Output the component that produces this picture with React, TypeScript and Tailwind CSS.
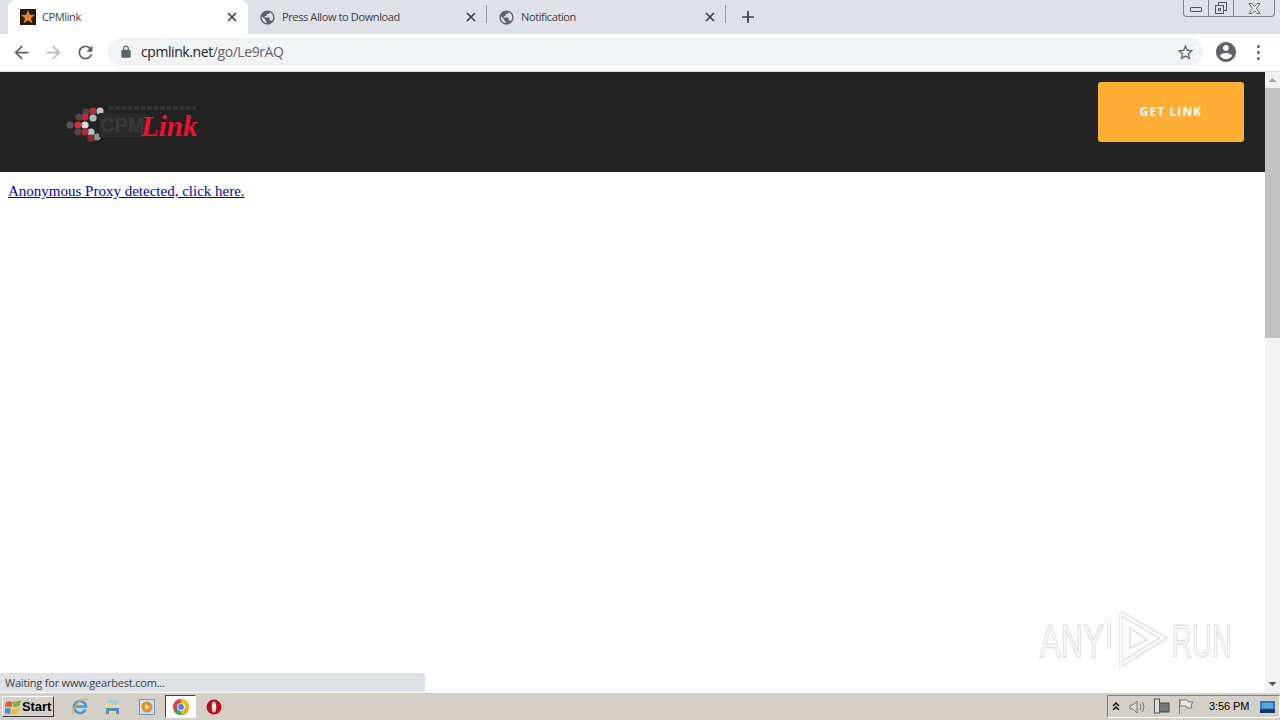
import type { ReactNode } from "react";

const uiFont = "font-['Open_Sans','Noto_Sans',sans-serif]";

const paths = {
  back: "M20 11H7.83l5.59-5.59L12 4l-8 8 8 8 1.41-1.41L7.83 13H20v-2z",
  forward: "M4 11h12.17l-5.59-5.59L12 4l8 8-8 8-1.41-1.41L16.17 13H4v-2z",
  reload:
    "M17.65 6.35C16.2 4.9 14.21 4 12 4c-4.42 0-7.99 3.58-7.99 8s3.57 8 7.99 8c3.73 0 6.84-2.55 7.73-6h-2.08c-.82 2.33-3.04 4-5.65 4-3.31 0-6-2.69-6-6s2.69-6 6-6c1.66 0 3.14.69 4.22 1.78L13 11h7V4l-2.35 2.35z",
  lock: "M18 8h-1V6c0-2.76-2.24-5-5-5S7 3.24 7 6v2H6c-1.1 0-2 .9-2 2v10c0 1.1.9 2 2 2h12c1.1 0 2-.9 2-2V10c0-1.1-.9-2-2-2zM9 6c0-1.66 1.34-3 3-3s3 1.34 3 3v2H9V6z",
  account:
    "M12 2C6.48 2 2 6.48 2 12s4.48 10 10 10 10-4.48 10-10S17.52 2 12 2zm0 3c1.66 0 3 1.34 3 3s-1.34 3-3 3-3-1.34-3-3 1.34-3 3-3zm0 14.2c-2.5 0-4.71-1.28-6-3.22.03-1.99 4-3.08 6-3.08 1.99 0 5.97 1.09 6 3.08-1.29 1.94-3.5 3.22-6 3.22z",
  star: "M22 9.24l-7.19-.62L12 2 9.19 8.63 2 9.24l5.46 4.73L5.82 21 12 17.27 18.18 21l-1.63-7.03L22 9.24zM12 15.4l-3.76 2.27 1-4.28-3.32-2.88 4.38-.38L12 6.1l1.71 4.04 4.38.38-3.32 2.88 1 4.28L12 15.4z",
  globe:
    "M12 2C6.48 2 2 6.48 2 12s4.48 10 10 10 10-4.48 10-10S17.52 2 12 2zm-1 17.93c-3.95-.49-7-3.85-7-7.93 0-.62.08-1.21.21-1.79L9 15v1c0 1.1.9 2 2 2v1.93zm6.9-2.54c-.26-.81-1-1.39-1.9-1.39h-1v-3c0-.55-.45-1-1-1H8v-2h2c.55 0 1-.45 1-1V7h2c1.1 0 2-.9 2-2v-.41c2.93 1.19 5 4.06 5 7.41 0 2.08-.8 3.97-2.1 5.39z",
};

function Icon({ d, size, color }: { d: string; size: number; color: string }) {
  return (
    <svg width={size} height={size} viewBox="0 0 24 24" fill={color} className="shrink-0">
      <path d={d} />
    </svg>
  );
}

function CloseX() {
  return (
    <svg width="10" height="10" viewBox="0 0 10 10" className="shrink-0">
      <path d="M1 1l8 8M9 1l-8 8" stroke="#3c4043" strokeWidth="1.7" />
    </svg>
  );
}

function Favicon() {
  return (
    <svg width="16" height="16" viewBox="0 0 16 16" className="shrink-0">
      <rect width="16" height="16" fill="#2a1a0c" />
      <path d="M8 1l1.9 4.8 5.1.3-4 3.2 1.4 5L8 11.5l-4.4 2.8L5 9.3 1 6.1l5.1-.3z" fill="#e8842c" />
    </svg>
  );
}

function Tab({ title, active, width, divider }: { title: string; active?: boolean; width: string; divider?: boolean }) {
  return (
    <div className={`${width} relative flex items-center pr-[11px] ${active ? "h-[34px] rounded-t-lg bg-white pl-3" : "h-[26px] pl-[11px]"}`}>
      {active ? <Favicon /> : <Icon d={paths.globe} size={17} color="#5f6368" />}
      <span className={`ml-[6px] mb-px flex-1 whitespace-nowrap text-[11px] leading-[15px] tracking-[-0.38px] text-[#3c4043] ${uiFont}`}>{title}</span>
      <CloseX />
      {divider && <span className="absolute right-0 top-[1px] h-[18px] w-px bg-[#9aa0a6]" />}
    </div>
  );
}

function TabStrip() {
  return (
    <div className="flex h-[34px] shrink-0 items-end bg-[#dee1e6] pl-2">
      <Tab title="CPMlink" active width="w-[240px]" />
      <div className="flex h-[34px] items-center">
        <Tab title="Press Allow to Download" width="w-[239px]" divider />
        <Tab title="Notification" width="w-[239px]" divider />
        <span className="ml-[16px]">
          <svg width="12" height="12" viewBox="0 0 12 12" className="block">
            <path d="M6 0v12M0 6h12" stroke="#3c4043" strokeWidth="1.7" />
          </svg>
        </span>
      </div>
      <div className="ml-auto mr-[5px] flex h-[17px] w-[92px] self-start rounded-b border border-t-0 border-[#7d8389] bg-[#dee1e6]">
        <WinButton width="w-[25px]">
          <span className="mt-[3px] block h-[5px] w-[12px] rounded-[1px] border border-[#555]" />
        </WinButton>
        <WinButton width="w-[25px]">
          <svg width="12" height="12" viewBox="0 0 12 12" fill="none" stroke="#555">
            <rect x="3.5" y="0.5" width="8" height="8" />
            <rect x="0.5" y="3.5" width="8" height="8" fill="#dee1e6" />
            <rect x="3.5" y="6.5" width="2" height="2" />
          </svg>
        </WinButton>
        <div className="flex flex-1 items-center justify-center">
          <svg width="13" height="11" viewBox="0 0 13 11" fill="#eef0f2" stroke="#666">
            <path d="M1 .5h3l2.5 3 2.5-3h3L8.5 5.500l3.500 5h-3L6.500 7.500 4 10.500H1l3.500-5z" />
          </svg>
        </div>
      </div>
    </div>
  );
}

function WinButton({ width, children }: { width: string; children: ReactNode }) {
  return <div className={`${width} flex items-center justify-center border-r border-[#7d8389]`}>{children}</div>;
}

function Toolbar() {
  return (
    <div className="flex h-[38px] shrink-0 items-center border-b border-[#dadce0] bg-white pb-px">
      <div className="ml-[11px] flex items-center gap-[11px]">
        <Icon d={paths.back} size={21} color="#5f6368" />
        <Icon d={paths.forward} size={21} color="#b9bcc0" />
        <Icon d={paths.reload} size={21} color="#5f6368" />
      </div>
      <div className="ml-[12px] flex h-[28px] w-[1095px] items-center rounded-full bg-[#f1f3f4] pl-[11px] pr-[8px]">
        <Icon d={paths.lock} size={14} color="#5f6368" />
        <span className={`ml-[8px] flex-1 text-[14px] leading-none tracking-[-0.42px] text-[#5f6368] ${uiFont}`}>
          <span className="text-[#202124]">cpmlink.net</span>/go/Le9rAQ
        </span>
        <Icon d={paths.star} size={19} color="#5f6368" />
      </div>
      <div className="ml-[11px]">
        <Icon d={paths.account} size={24} color="#5f6368" />
      </div>
      <div className="ml-[19px] flex flex-col gap-[3px]">
        <span className="h-[3px] w-[3px] rounded-full bg-[#5f6368]" />
        <span className="h-[3px] w-[3px] rounded-full bg-[#5f6368]" />
        <span className="h-[3px] w-[3px] rounded-full bg-[#5f6368]" />
      </div>
    </div>
  );
}

function Logo() {
  const dots = [
    [34, 6, "#c4c8c8"], [27, 6, "#b5283a"], [20, 7, "#4a4a4a"],
    [27, 13, "#a9c0bd"], [19, 12, "#c9283c"], [13, 12, "#4a4a4a"],
    [19, 20, "#d3dcdc"], [12, 20, "#d12a3e"], [4, 20, "#555555"],
    [25, 27, "#b4c4c2"], [19, 27, "#b5283a"], [12, 27, "#4a4a4a"],
    [31, 32, "#8a9695"], [25, 33, "#8c2a35"],
  ] as const;
  return (
    <div className="relative h-[36px] w-[134px]">
      <svg width="38" height="37" viewBox="0 0 38 37" className="absolute left-0 top-0">
        {dots.map(([x, y, fill]) => (
          <circle key={`${x}-${y}`} cx={x} cy={y} r="3.600" fill={fill} />
        ))}
      </svg>
      <svg width="90" height="6" viewBox="0 0 90 6" className="absolute left-[42px] top-0">
        <path d="M0 3h88" stroke="#323232" strokeWidth="4" strokeDasharray="5 1.500" />
      </svg>
      <span className="absolute left-[33px] top-[8px] flex h-[24px] items-center bg-[#2a2a2a] px-px font-['Liberation_Sans',sans-serif] text-[20px] font-bold leading-none text-[#3a3a3a]">
        CPM
      </span>
      <span className="absolute left-[75px] top-[7px] font-['Liberation_Serif',serif] text-[29px] font-bold italic leading-none text-[#ee1133]">
        Link
      </span>
    </div>
  );
}

function Scrollbar() {
  return (
    <div className="flex w-[15px] shrink-0 flex-col items-center bg-[#f1f1f1]">
      <svg width="15" height="16" viewBox="0 0 15 16" className="shrink-0">
        <path d="M3.500 10l4-4 4 4z" fill="#a3a3a3" />
      </svg>
      <div className="h-[250px] w-full shrink-0 bg-[#c1c1c1]" />
      <svg width="15" height="16" viewBox="0 0 15 16" className="mt-auto shrink-0">
        <path d="M3.500 6l4 4 4-4z" fill="#505050" />
      </svg>
    </div>
  );
}

function Watermark() {
  return (
    <svg width="220" height="66" viewBox="0 0 220 66" className="absolute left-[1036px] top-[537px] blur-[0.4px]">
      <g fill="#fbfbfb" stroke="#e2e2e2" strokeWidth="1.6" fontFamily="'Liberation Sans',sans-serif" fontSize="47">
        <text x="4" y="48" textLength="64" lengthAdjust="spacingAndGlyphs">ANY</text>
        <text x="136" y="48" textLength="60" lengthAdjust="spacingAndGlyphs">RUN</text>
      </g>
      <g fill="none" strokeLinejoin="miter">
        <path d="M84 4L127 29 84 56" stroke="#e6e6e6" strokeWidth="6" />
        <path d="M84 4L127 29 84 56" stroke="#ffffff" strokeWidth="2" />
        <path d="M94 19L111 31 94 39z" stroke="#e4e4e4" strokeWidth="2" />
        <path d="M85 6v52M73 12v28" stroke="#e6e6e6" strokeWidth="4" />
        <path d="M85 6v52M73 12v28" stroke="#ffffff" strokeWidth="1.500" />
      </g>
    </svg>
  );
}

function Page() {
  return (
    <div className="relative flex min-h-0 flex-1 bg-white">
      <div className="flex-1">
        <header className="flex h-[100px] justify-between bg-[#222222]">
          <div className="ml-[66px] mt-[33px]">
            <Logo />
          </div>
          <button className="mr-[21px] mt-[10px] h-[60px] w-[146px] rounded-[3px] bg-[#fdae35] font-['Open_Sans',sans-serif] text-[12px] font-bold tracking-[1.1px] text-white">
            GET LINK
          </button>
        </header>
        <p className="mx-2 mt-[10px] font-['Liberation_Serif',serif] text-[15px] leading-[19px]">
          <a href="#" className="text-[#0000cc] underline">
            Anonymous Proxy detected, click here.
          </a>
        </p>
      </div>
      <Scrollbar />
      <Watermark />
      <div className={`absolute bottom-0 left-0 flex h-[19px] w-[425px] items-center rounded-tr-[3px] bg-[#dee1e6] pl-[5px] pt-px text-[11px] tracking-[-0.2px] text-[#3c4043] ${uiFont}`}>
        Waiting for www.gearbest.com...
      </div>
    </div>
  );
}

function StartButton() {
  return (
    <div className="ml-[2px] flex h-[21px] w-[52px] items-center border border-b-[#404040] border-l-white border-r-[#404040] border-t-white bg-[#d4d0c8] pl-[2px]">
      <svg width="17" height="16" viewBox="0 0 16 15" className="shrink-0">
        <path d="M1 3q3-2 6 0l-1 5q-3-2-6 0z" fill="#e2582a" />
        <path d="M8 2q3 1 7-1l-1 5q-3 2-7 1z" fill="#7fb23a" />
        <path d="M0 9q3-1 5.500 0l-1 5q-3-1-5.500 0z" fill="#3f8fd8" />
        <path d="M6.800 9q3 1 7-1l-1 5q-3 2-7 1z" fill="#f2bd2c" />
      </svg>
      <span className="font-['Liberation_Sans',sans-serif] text-[13px] font-bold leading-none tracking-[-0.1px] text-black">Start</span>
    </div>
  );
}

function Taskbar() {
  return (
    <div className="flex h-[28px] shrink-0 items-center border-t border-white bg-[#d4d0c8]">
      <StartButton />
      <div className="ml-[17px] flex items-center">
        <svg width="18" height="18" viewBox="0 0 18 18">
          <path d="M14.500 11.500A6 6 0 1 1 15 8.500H4" fill="none" stroke="#3a9bdc" strokeWidth="2.600" />
          <path d="M1.500 16Q1 12 6 6T16.500 1.500" fill="none" stroke="#e2b33c" strokeWidth="1.300" />
        </svg>
        <svg width="15" height="16" viewBox="0 0 15 16" className="ml-[16px]">
          <path d="M2 1h11v5H2z" fill="#a5cfdf" />
          <path d="M1 4h5l1 2h7v9H1z" fill="#ecd98c" />
          <path d="M1 9h13v6h-3v-3H4v3H1z" fill="#4f93c4" />
        </svg>
        <svg width="16" height="16" viewBox="0 0 16 16" className="ml-[19px]">
          <rect x="0.500" y="0.500" width="15" height="15" fill="#cfe0ef" stroke="#6f9bc4" />
          <circle cx="8" cy="8" r="5.500" fill="#ec8a1e" />
          <path d="M6.500 5l4 3-4 3z" fill="#fff" />
        </svg>
        <div className="ml-[10px] flex h-[23px] w-[31px] items-center justify-center border border-b-white border-l-[#404040] border-r-white border-t-[#404040] bg-white">
          <svg width="16" height="16" viewBox="0 0 16 16">
            <circle cx="8" cy="8" r="8" fill="#d6453b" />
            <path d="M8 8L15 12A8 8 0 0 1 1 12z" fill="#3aa757" />
            <path d="M8 0a8 8 0 0 1 7.800 10L8 8z" fill="#f4c20d" />
            <path d="M8 8L16 8A8 8 0 0 1 8 16z" fill="#e0b020" />
            <circle cx="8" cy="8" r="3.600" fill="#4285f4" stroke="#fff" />
          </svg>
        </div>
        <svg width="16" height="16" viewBox="0 0 16 16" className="ml-[10px]">
          <circle cx="8" cy="8" r="7.500" fill="#b3121d" />
          <ellipse cx="8" cy="8" rx="2.300" ry="5.500" fill="#f4e4e4" />
        </svg>
      </div>
      <div className="ml-auto flex h-[23px] w-[173px] items-center border border-b-white border-l-[#808080] border-r-white border-t-[#808080]">
        <svg width="8" height="9" viewBox="0 0 8 9" className="ml-[4px]" fill="none" stroke="#000" strokeWidth="1.400">
          <path d="M1 4l3-3 3 3M1 8l3-3 3 3" />
        </svg>
        <svg width="17" height="16" viewBox="0 0 17 16" className="ml-[9px]" fill="none" stroke="#777">
          <path d="M1 6h3l4-4v12l-4-4H1z" fill="#ddd" />
          <path d="M11 5q2 3 0 6M13.500 3q3 5 0 10" />
        </svg>
        <svg width="17" height="17" viewBox="0 0 17 17" className="ml-[7px]">
          <rect x="5" y="5" width="11" height="9" fill="#777" stroke="#444" />
          <rect x="1.500" y="1" width="5" height="14" fill="#ddd" stroke="#555" />
        </svg>
        <svg width="16" height="17" viewBox="0 0 16 17" className="ml-[8px]" fill="none" stroke="#777">
          <path d="M1.500 1v15" />
          <path d="M2 2h7l1.500 2H15l-2 3 1 3H9L8 8H2z" fill="#e8e8e8" />
        </svg>
        <span className="ml-[15px] font-['Liberation_Sans',sans-serif] text-[11px] leading-none tracking-[-0.1px] text-black">3:56 PM</span>
        <svg width="15" height="12" viewBox="0 0 16 13" className="ml-[11px]">
          <rect width="16" height="13" fill="#2d74bd" />
          <rect y="9" width="16" height="4" fill="#14385f" />
          <rect x="2" y="2" width="12" height="6" fill="#5ba3de" />
        </svg>
      </div>
    </div>
  );
}

export default function App() {
  return (
    <div className="flex h-screen w-full flex-col overflow-hidden bg-white">
      <TabStrip />
      <Toolbar />
      <Page />
      <Taskbar />
    </div>
  );
}
